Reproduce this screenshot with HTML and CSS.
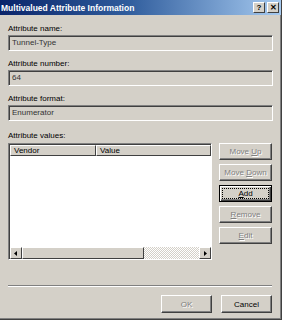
FILE: index.html
```html
<!DOCTYPE html>
<html lang="en">
<head>
  <meta charset="UTF-8" />
  <title>Multivalued Attribute Information</title>
  <link rel="stylesheet" href="styles.css">
</head>
<body>
  <div class="window">
    <div class="titlebar">
      <span class="title">Multivalued Attribute Information</span>
      <div class="caption-btns">
        <span class="cap-btn">?</span>
        <span class="cap-btn">&#x2715;</span>
      </div>
    </div>

    <div class="content">
      <div class="label label-first">Attribute name:</div>
      <div class="field">Tunnel-Type</div>

      <div class="label">Attribute number:</div>
      <div class="field">64</div>

      <div class="label">Attribute format:</div>
      <div class="field">Enumerator</div>

      <div class="label label-values">Attribute values:</div>
      <div class="values-row">
        <div class="listview">
          <div class="lv-header">
            <div class="col col-vendor">Vendor</div>
            <div class="col col-value">Value</div>
          </div>
          <div class="lv-body"></div>
          <div class="hscroll">
            <div class="sb-btn">
              <svg width="4" height="5" viewBox="0 0 4 5"><path d="M3 0 L0 2.5 L3 5 Z" fill="#000"/></svg>
            </div>
            <div class="sb-thumb"></div>
            <div class="sb-track"></div>
            <div class="sb-btn">
              <svg width="4" height="5" viewBox="0 0 4 5"><path d="M1 0 L4 2.5 L1 5 Z" fill="#000"/></svg>
            </div>
          </div>
        </div>
        <div class="side-btns">
          <button class="btn" disabled>Move <u>U</u>p</button>
          <button class="btn" disabled>Move <u>D</u>own</button>
          <button class="btn btn-default"><span class="focus"><u>A</u>dd</span></button>
          <button class="btn" disabled><u>R</u>emove</button>
          <button class="btn" disabled><u>E</u>dit</button>
        </div>
      </div>

      <div class="separator"></div>

      <div class="footer">
        <button class="btn btn-wide" disabled>OK</button>
        <button class="btn btn-wide">Cancel</button>
      </div>
    </div>
  </div>
</body>
</html>
```

FILE: styles.css
```css
body {
  margin: 0;
  padding: 0;
  background: #d4d0c8;
  font-family: "Liberation Sans", Arial, sans-serif;
  font-size: 8px;
}

.window {
  width: 282px;
  height: 320px;
  box-sizing: border-box;
  background: #d4d0c8;
  border-right: 1px solid #404040;
  border-bottom: 1px solid #404040;
  box-shadow: inset -1px -1px 0 #808080;
  overflow: hidden;
}

.titlebar {
  height: 15px;
  display: flex;
  align-items: center;
  justify-content: space-between;
  padding: 0 2px 0 1px;
  background: linear-gradient(to right, #0a246a, #2f5c9c 45%, #a6caf0);
}

.title {
  color: #fff;
  font-weight: bold;
  font-size: 8.5px;
}

.caption-btns {
  display: flex;
  gap: 2px;
}

.cap-btn {
  width: 12px;
  height: 11px;
  box-sizing: border-box;
  background: #d4d0c8;
  border: 1px solid;
  border-color: #fff #404040 #404040 #fff;
  font-size: 8px;
  font-weight: bold;
  line-height: 9px;
  text-align: center;
  color: #000;
}

.content {
  padding: 0 8px;
  display: flex;
  flex-direction: column;
}

.label {
  height: 10px;
  line-height: 10px;
  margin-top: 8px;
  color: #000;
}

.label-first {
  margin-top: 9px;
}

.label-values {
  margin-top: 10px;
}

.field {
  margin-top: 1px;
  height: 16px;
  box-sizing: border-box;
  border: 1px solid;
  border-color: #808080 #fff #fff #808080;
  box-shadow: inset 1px 1px 0 #404040, inset -1px -1px 0 #d4d0c8;
  padding: 0 3px;
  line-height: 14px;
  color: #333;
  background: #d4d0c8;
}

.values-row {
  margin-top: 2px;
  display: flex;
  justify-content: space-between;
}

.listview {
  width: 204px;
  height: 117px;
  box-sizing: border-box;
  border: 1px solid;
  border-color: #808080 #fff #fff #808080;
  box-shadow: inset 1px 1px 0 #404040;
  padding: 1px 0 0 1px;
  background: #fff;
  display: flex;
  flex-direction: column;
}

.lv-header {
  display: flex;
  height: 11px;
}

.col {
  box-sizing: border-box;
  background: #d4d0c8;
  border: 1px solid;
  border-color: #fff #404040 #404040 #fff;
  line-height: 9px;
  padding-left: 3px;
}

.col-vendor {
  width: 86px;
}

.col-value {
  flex: 1;
}

.lv-body {
  flex: 1;
}

.hscroll {
  height: 12px;
  display: flex;
}

.sb-btn {
  width: 12px;
  height: 12px;
  box-sizing: border-box;
  background: #d4d0c8;
  border: 1px solid;
  border-color: #fff #404040 #404040 #fff;
  display: flex;
  align-items: center;
  justify-content: center;
}

.sb-thumb {
  width: 122px;
  box-sizing: border-box;
  background: #d4d0c8;
  border: 1px solid;
  border-color: #fff #404040 #404040 #fff;
}

.sb-track {
  flex: 1;
  background-color: #eae8e3;
  background-image: repeating-conic-gradient(#fff 0 25%, #d4d0c8 0 50%);
  background-size: 2px 2px;
}

.side-btns {
  display: flex;
  flex-direction: column;
  gap: 4px;
  margin-right: 1px;
}

.btn {
  width: 53px;
  height: 17px;
  padding: 0;
  box-sizing: border-box;
  font-family: "Liberation Sans", Arial, sans-serif;
  font-size: 8px;
  font-weight: normal;
  color: #000;
  background: #d4d0c8;
  border: 1px solid;
  border-color: #fff #404040 #404040 #fff;
  box-shadow: inset -1px -1px 0 #808080;
}

.btn:disabled {
  color: #808080;
  text-shadow: 1px 1px 0 #fff;
}

.btn-default {
  border: 1px solid #000;
  box-shadow: inset 1px 1px 0 #fff, inset -1px -1px 0 #404040, inset -2px -2px 0 #808080;
  padding: 2px;
}

.focus {
  display: block;
  height: 100%;
  box-sizing: border-box;
  border: 1px dotted #000;
  line-height: 9px;
}

.separator {
  margin-top: 25px;
  height: 0;
  border-top: 1px solid #808080;
  border-bottom: 1px solid #fff;
  margin-right: 1px;
}

.footer {
  margin-top: 8px;
  display: flex;
  justify-content: flex-end;
  gap: 9px;
  margin-right: 1px;
}

.btn-wide {
  width: 51px;
  height: 18px;
}
```
